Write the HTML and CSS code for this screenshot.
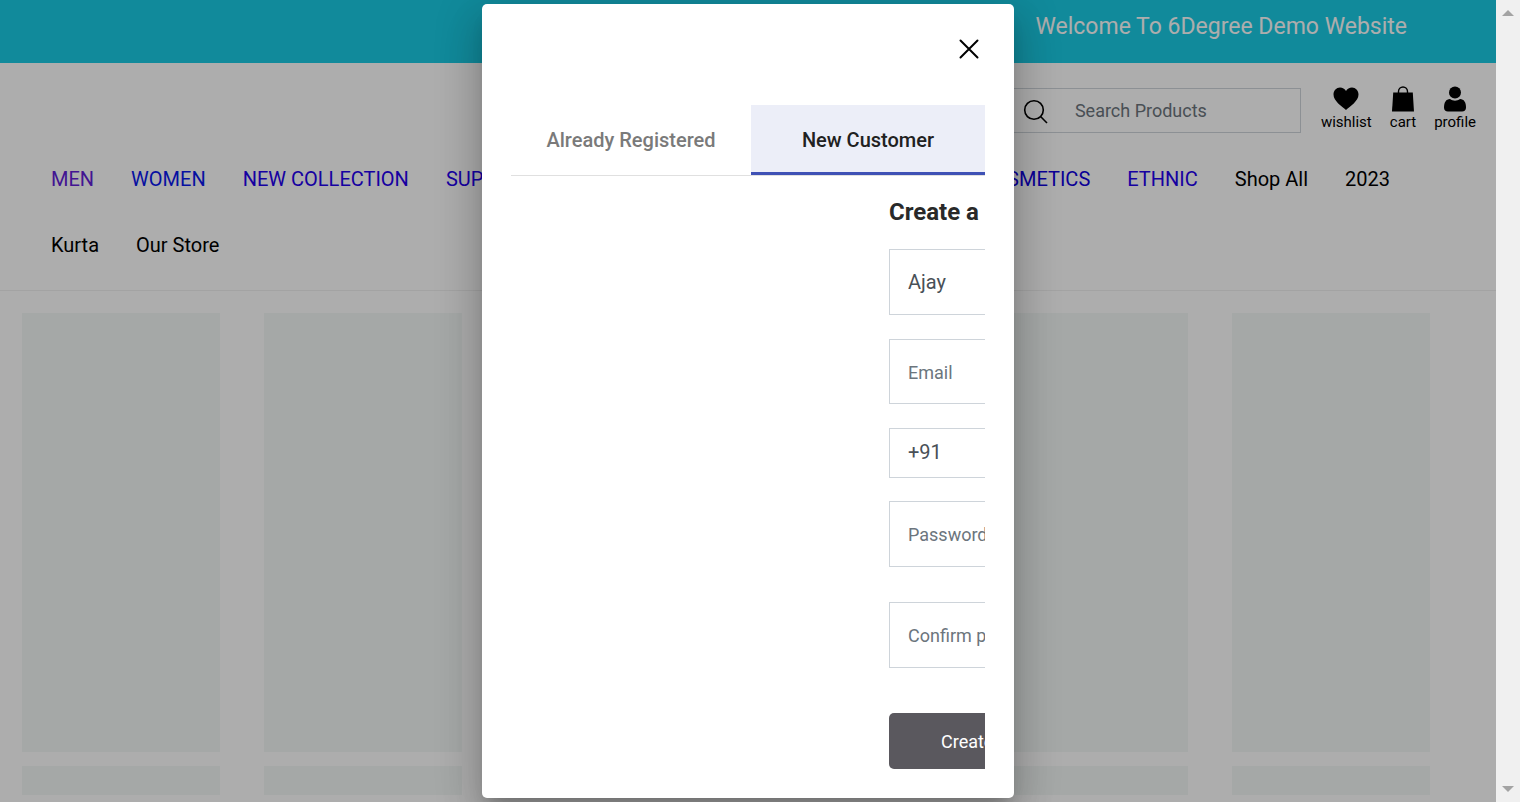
FILE: index.html
```html
<!DOCTYPE html>
<html lang="en">
<head>
<meta charset="utf-8">
<title>6Degree Demo Website</title>
<link rel="stylesheet" href="styles.css">
</head>
<body>
<div class="page">
  <div class="banner">Welcome To 6Degree Demo Website</div>
  <header class="header">
    <div class="tools">
      <label class="search">
        <svg class="search-icon" viewBox="0 0 26 26" aria-label="Search"><circle cx="11" cy="12" r="9.300"/><path d="M17.800 18.800 24 25"/></svg>
        <input class="search-input" type="search" placeholder="Search Products">
      </label>
      <a class="tool" href="#wishlist">
        <svg class="tool-icon" viewBox="0 0 26 26"><path d="M13 24C9 20.500.5 15 .5 8.500.5 4.500 3.500 1.500 7 1.500c2.500 0 4.800 1.300 6 3.500 1.200-2.200 3.500-3.500 6-3.500 3.500 0 6.500 3 6.500 7C25.500 15 17 20.500 13 24Z"/></svg>
        wishlist
      </a>
      <a class="tool" href="#cart">
        <svg class="tool-icon" viewBox="0 0 26 26"><path d="M3.200 6.500h19.600L24 25.500H2Z"/><path class="line" d="M8.500 8V5.500a4.500 4.500 0 0 1 9 0V8"/></svg>
        cart
      </a>
      <a class="tool" href="#profile">
        <svg class="tool-icon" viewBox="0 0 26 26"><circle cx="13" cy="6.500" r="6"/><path d="M8 13c3 2.300 7 2.300 10 0 4 0 6 3.500 6 8.500 0 2.700-1.500 4-4 4H6c-2.500 0-4-1.300-4-4 0-5 2-8.500 6-8.500Z"/></svg>
        profile
      </a>
    </div>
    <nav class="nav">
      <div class="nav-row">
        <a class="visited" href="#men">MEN</a>
        <a class="women" href="#women">WOMEN</a>
        <a class="link" href="#new">NEW COLLECTION</a>
        <a class="link grow" href="#super">SUPER SALE</a>
        <a class="dark-link" href="#cosmetics">COSMETICS</a>
        <a class="link" href="#ethnic">ETHNIC</a>
        <a href="#all">Shop All</a>
        <a href="#2023">2023</a>
      </div>
      <div class="nav-row">
        <a href="#kurta">Kurta</a>
        <a href="#store">Our Store</a>
      </div>
    </nav>
  </header>
  <main class="skeletons">
    <div class="card"></div><div class="card"></div><div class="card"></div><div class="card"></div><div class="card"></div><div class="card"></div>
    <div class="line-card"></div><div class="line-card"></div><div class="line-card"></div><div class="line-card"></div><div class="line-card"></div><div class="line-card"></div>
  </main>
  <div class="backdrop">
    <section class="modal" role="dialog" aria-label="Sign up">
      <button class="close" type="button" aria-label="Close">
        <svg class="close-icon" viewBox="0 0 20 20"><path d="M1.500 1.500l17 17M18.500 1.500l-17 17"/></svg>
      </button>
      <div class="panel">
        <div class="tabs" role="tablist">
          <button class="tab" type="button" role="tab" aria-selected="false">Already Registered</button>
          <button class="tab active" type="button" role="tab" aria-selected="true">New Customer</button>
        </div>
        <form class="form">
          <h2 class="title">Create a new account</h2>
          <input class="field" type="text" value="Ajay" aria-label="Name">
          <input class="field email" type="email" placeholder="Email" aria-label="Email">
          <input class="field phone" type="tel" value="+91" aria-label="Phone">
          <input class="field" type="password" placeholder="Password" aria-label="Password">
          <input class="field confirm" type="password" placeholder="Confirm password" aria-label="Confirm password">
          <button class="submit" type="button">Create account</button>
        </form>
      </div>
    </section>
  </div>
</div>
<aside class="scrollbar" aria-hidden="true">
  <svg class="arrow" viewBox="0 0 12 6"><path d="M0 6 6 0l6 6Z"/></svg>
  <svg class="arrow" viewBox="0 0 12 6"><path d="M0 0h12L6 6Z"/></svg>
</aside>
</body>
</html>
```
FILE: styles.css
```css
* { box-sizing: border-box; }
body {
  margin: 0;
  display: grid;
  grid-template-columns: 1fr 24px;
  height: 100vh;
  overflow: hidden;
  font-family: Roboto, sans-serif;
  font-size: 20px;
  color: #000;
}
a { color: inherit; text-decoration: none; }
button, input { font: inherit; }

.page { position: relative; overflow: hidden; background: #fff; }
.banner {
  height: 63px;
  padding: 13px 89px 0 0;
  background: #1acce5;
  color: #fff;
  font-size: 23px;
  line-height: 28px;
  text-align: right;
}
.header { border-bottom: 1px solid #f0f0f0; }
.tools {
  display: flex;
  justify-content: flex-end;
  gap: 18px;
  padding: 23px 20px 0 0;
}
.search {
  display: flex;
  align-items: center;
  gap: 26px;
  width: 400px;
  height: 45px;
  margin: 2px 2px 0 0;
  padding-left: 121px;
  border: 1px solid #ced4da;
}
.search-icon { width: 26px; height: 26px; flex: none; fill: none; stroke: #000; stroke-width: 1.6; }
.search-input { flex: 1; min-width: 0; padding: 0; border: 0; background: none; font-size: 18px; }
.search-input::placeholder { color: #6c757d; opacity: 1; }
.tool {
  display: flex;
  flex-direction: column;
  align-items: center;
  font-size: 15px;
  line-height: 20px;
}
.tool-icon { width: 26px; height: 26px; }
.tool-icon .line { fill: none; stroke: #000; stroke-width: 1.4; }

.nav { padding: 13px 106px 12px 51px; }
.nav-row { display: flex; gap: 37px; line-height: 66px; white-space: nowrap; }
.grow { flex: 1; }
.visited { color: #6220d8; }
.women { color: #0a18ee; }
.link { color: #2200ee; }
.dark-link { color: #1000dd; }

.skeletons {
  display: grid;
  grid-template-columns: repeat(6, 1fr);
  gap: 14px 44px;
  padding: 22px 66px 0 22px;
}
.card, .line-card { background: #f4f8f6; }
.card { height: 439px; }
.line-card { height: 29px; }

.backdrop {
  position: absolute;
  inset: 0;
  display: flex;
  align-items: center;
  justify-content: center;
  background: rgba(0, 0, 0, .32);
}
.modal {
  display: flex;
  flex-direction: column;
  width: 532px;
  padding: 32px 29px 29px;
  border-radius: 5px;
  background: #fff;
  box-shadow: 0 11px 15px -7px rgba(0, 0, 0, .2), 0 24px 38px 3px rgba(0, 0, 0, .14), 0 9px 46px 8px rgba(0, 0, 0, .12);
}
.close {
  align-self: flex-end;
  width: 32px;
  height: 25px;
  margin-bottom: 44px;
  padding: 0;
  border: 0;
  background: none;
}
.close-icon { display: block; width: 20px; height: 20px; margin: 0 auto; fill: none; stroke: #000; stroke-width: 2; stroke-linecap: round; }
.panel { overflow: hidden; }
.tabs { display: flex; border-bottom: 1px solid #e0e0e0; }
.tab {
  width: 240px;
  height: 70px;
  padding: 0;
  border: 0;
  background: #fff;
  color: #7a7a7a;
  font-weight: 500;
}
.tab.active { flex: 1; background: #eceef8; color: #212121; box-shadow: inset 0 -3px #3f51b5; }
.form { display: flex; flex-direction: column; width: 400px; margin-left: 378px; }
.title { margin: 22px 0 23px; font-size: 24px; line-height: 28px; font-weight: 700; color: #292929; white-space: nowrap; }
.field {
  height: 66px;
  margin-bottom: 24px;
  padding: 0 18px;
  border: 1px solid #ced4da;
  border-radius: 0;
  background: #fff;
  color: #495057;
}
.field::placeholder { color: #6c757d; opacity: 1; font-size: 18px; }
.email { height: 65px; }
.phone { height: 50px; margin-bottom: 23px; padding-bottom: 2px; }
.confirm { margin: 11px 0 45px; }
.submit {
  height: 56px;
  padding: 0 0 0 52px;
  border: 0;
  border-radius: 5px;
  background: #5a585e;
  color: #fff;
  font-size: 18px;
  text-align: left;
}

.scrollbar {
  display: flex;
  flex-direction: column;
  justify-content: space-between;
  align-items: center;
  padding: 10px 0;
  background: #f0f0f0;
}
.arrow { width: 12px; height: 6px; fill: #a3a3a3; }
```
